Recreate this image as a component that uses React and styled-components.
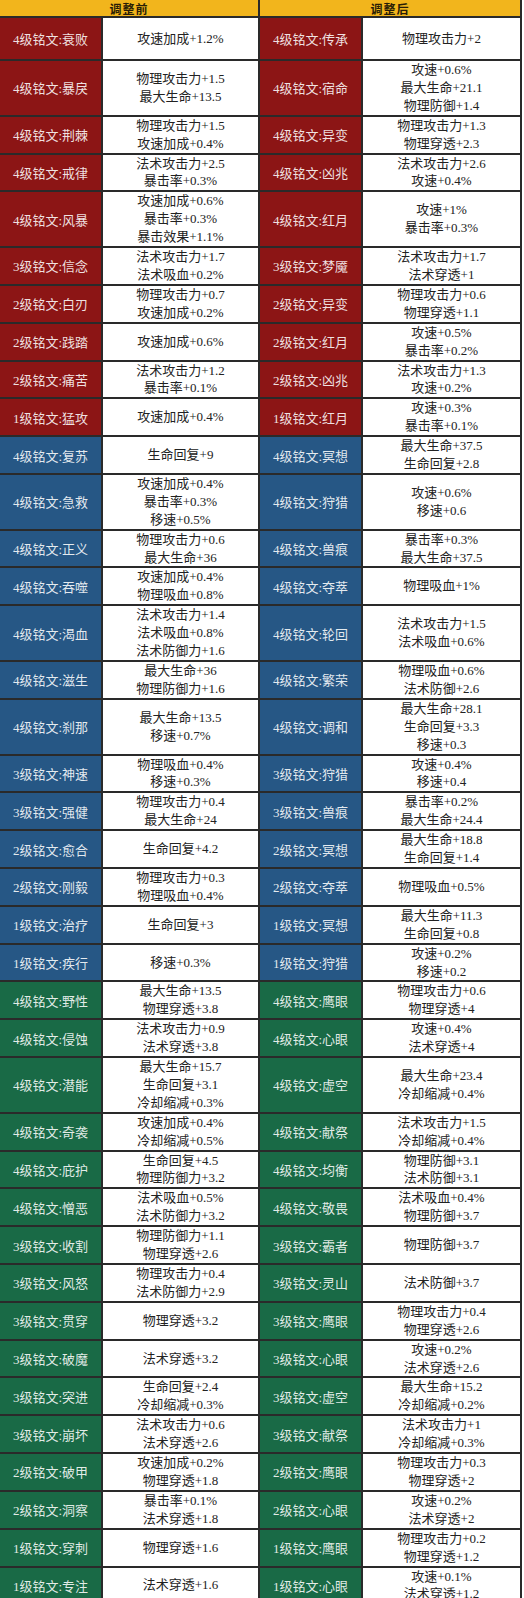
import React from "react";
import styled, { createGlobalStyle } from "styled-components";

const GlobalStyle = createGlobalStyle`
  body {
    margin: 0;
    background: #ffffff;
  }
`;

const tones = {
  red: "#8c1515",
  blue: "#265785",
  green: "#196a46",
};

const rows = [
  ["red", "4级铭文:衰败", ["攻速加成+1.2%"], "4级铭文:传承", ["物理攻击力+2"], true],
  ["red", "4级铭文:暴戾", ["物理攻击力+1.5", "最大生命+13.5"], "4级铭文:宿命", ["攻速+0.6%", "最大生命+21.1", "物理防御+1.4"]],
  ["red", "4级铭文:荆棘", ["物理攻击力+1.5", "攻速加成+0.4%"], "4级铭文:异变", ["物理攻击力+1.3", "物理穿透+2.3"]],
  ["red", "4级铭文:戒律", ["法术攻击力+2.5", "暴击率+0.3%"], "4级铭文:凶兆", ["法术攻击力+2.6", "攻速+0.4%"]],
  ["red", "4级铭文:风暴", ["攻速加成+0.6%", "暴击率+0.3%", "暴击效果+1.1%"], "4级铭文:红月", ["攻速+1%", "暴击率+0.3%"]],
  ["red", "3级铭文:信念", ["法术攻击力+1.7", "法术吸血+0.2%"], "3级铭文:梦魇", ["法术攻击力+1.7", "法术穿透+1"]],
  ["red", "2级铭文:白刃", ["物理攻击力+0.7", "攻速加成+0.2%"], "2级铭文:异变", ["物理攻击力+0.6", "物理穿透+1.1"]],
  ["red", "2级铭文:践踏", ["攻速加成+0.6%"], "2级铭文:红月", ["攻速+0.5%", "暴击率+0.2%"]],
  ["red", "2级铭文:痛苦", ["法术攻击力+1.2", "暴击率+0.1%"], "2级铭文:凶兆", ["法术攻击力+1.3", "攻速+0.2%"]],
  ["red", "1级铭文:猛攻", ["攻速加成+0.4%"], "1级铭文:红月", ["攻速+0.3%", "暴击率+0.1%"]],
  ["blue", "4级铭文:复苏", ["生命回复+9"], "4级铭文:冥想", ["最大生命+37.5", "生命回复+2.8"]],
  ["blue", "4级铭文:急救", ["攻速加成+0.4%", "暴击率+0.3%", "移速+0.5%"], "4级铭文:狩猎", ["攻速+0.6%", "移速+0.6"]],
  ["blue", "4级铭文:正义", ["物理攻击力+0.6", "最大生命+36"], "4级铭文:兽痕", ["暴击率+0.3%", "最大生命+37.5"]],
  ["blue", "4级铭文:吞噬", ["攻速加成+0.4%", "物理吸血+0.8%"], "4级铭文:夺萃", ["物理吸血+1%"]],
  ["blue", "4级铭文:渴血", ["法术攻击力+1.4", "法术吸血+0.8%", "法术防御力+1.6"], "4级铭文:轮回", ["法术攻击力+1.5", "法术吸血+0.6%"]],
  ["blue", "4级铭文:滋生", ["最大生命+36", "物理防御力+1.6"], "4级铭文:繁荣", ["物理吸血+0.6%", "法术防御+2.6"]],
  ["blue", "4级铭文:刹那", ["最大生命+13.5", "移速+0.7%"], "4级铭文:调和", ["最大生命+28.1", "生命回复+3.3", "移速+0.3"]],
  ["blue", "3级铭文:神速", ["物理吸血+0.4%", "移速+0.3%"], "3级铭文:狩猎", ["攻速+0.4%", "移速+0.4"]],
  ["blue", "3级铭文:强健", ["物理攻击力+0.4", "最大生命+24"], "3级铭文:兽痕", ["暴击率+0.2%", "最大生命+24.4"]],
  ["blue", "2级铭文:愈合", ["生命回复+4.2"], "2级铭文:冥想", ["最大生命+18.8", "生命回复+1.4"]],
  ["blue", "2级铭文:刚毅", ["物理攻击力+0.3", "物理吸血+0.4%"], "2级铭文:夺萃", ["物理吸血+0.5%"]],
  ["blue", "1级铭文:治疗", ["生命回复+3"], "1级铭文:冥想", ["最大生命+11.3", "生命回复+0.8"]],
  ["blue", "1级铭文:疾行", ["移速+0.3%"], "1级铭文:狩猎", ["攻速+0.2%", "移速+0.2"]],
  ["green", "4级铭文:野性", ["最大生命+13.5", "物理穿透+3.8"], "4级铭文:鹰眼", ["物理攻击力+0.6", "物理穿透+4"]],
  ["green", "4级铭文:侵蚀", ["法术攻击力+0.9", "法术穿透+3.8"], "4级铭文:心眼", ["攻速+0.4%", "法术穿透+4"]],
  ["green", "4级铭文:潜能", ["最大生命+15.7", "生命回复+3.1", "冷却缩减+0.3%"], "4级铭文:虚空", ["最大生命+23.4", "冷却缩减+0.4%"]],
  ["green", "4级铭文:奇袭", ["攻速加成+0.4%", "冷却缩减+0.5%"], "4级铭文:献祭", ["法术攻击力+1.5", "冷却缩减+0.4%"]],
  ["green", "4级铭文:庇护", ["生命回复+4.5", "物理防御力+3.2"], "4级铭文:均衡", ["物理防御+3.1", "法术防御+3.1"]],
  ["green", "4级铭文:憎恶", ["法术吸血+0.5%", "法术防御力+3.2"], "4级铭文:敬畏", ["法术吸血+0.4%", "物理防御+3.7"]],
  ["green", "3级铭文:收割", ["物理防御力+1.1", "物理穿透+2.6"], "3级铭文:霸者", ["物理防御+3.7"]],
  ["green", "3级铭文:风怒", ["物理攻击力+0.4", "法术防御力+2.9"], "3级铭文:灵山", ["法术防御+3.7"]],
  ["green", "3级铭文:贯穿", ["物理穿透+3.2"], "3级铭文:鹰眼", ["物理攻击力+0.4", "物理穿透+2.6"]],
  ["green", "3级铭文:破魔", ["法术穿透+3.2"], "3级铭文:心眼", ["攻速+0.2%", "法术穿透+2.6"]],
  ["green", "3级铭文:突进", ["生命回复+2.4", "冷却缩减+0.3%"], "3级铭文:虚空", ["最大生命+15.2", "冷却缩减+0.2%"]],
  ["green", "3级铭文:崩坏", ["法术攻击力+0.6", "法术穿透+2.6"], "3级铭文:献祭", ["法术攻击力+1", "冷却缩减+0.3%"]],
  ["green", "2级铭文:破甲", ["攻速加成+0.2%", "物理穿透+1.8"], "2级铭文:鹰眼", ["物理攻击力+0.3", "物理穿透+2"]],
  ["green", "2级铭文:洞察", ["暴击率+0.1%", "法术穿透+1.8"], "2级铭文:心眼", ["攻速+0.2%", "法术穿透+2"]],
  ["green", "1级铭文:穿刺", ["物理穿透+1.6"], "1级铭文:鹰眼", ["物理攻击力+0.2", "物理穿透+1.2"]],
  ["green", "1级铭文:专注", ["法术穿透+1.6"], "1级铭文:心眼", ["攻速+0.1%", "法术穿透+1.2"]],
];

export default function App() {
  return (
    <>
      <GlobalStyle />
      <Table>
        <HeadCell>调整前</HeadCell>
        <HeadCell>调整后</HeadCell>
        {rows.map(([tone, leftName, leftFx, rightName, rightFx, tall], i) => (
          <React.Fragment key={i}>
            <NameCell $tone={tone} $tall={tall}>{leftName}</NameCell>
            <FxCell $tall={tall}>
              {leftFx.map((line) => (
                <FxLine key={line}>{line}</FxLine>
              ))}
            </FxCell>
            <NameCell $tone={tone} $tall={tall}>{rightName}</NameCell>
            <FxCell $tall={tall}>
              {rightFx.map((line) => (
                <FxLine key={line}>{line}</FxLine>
              ))}
            </FxCell>
          </React.Fragment>
        ))}
      </Table>
    </>
  );
}

const Table = styled.div`
  display: grid;
  grid-template-columns: 101px 155px 101px 157px;
  gap: 2px;
  width: 520px;
  background: #2a2a2a;
  border-right: 2px solid #2a2a2a;
  font-family: "Liberation Serif", "Noto Sans CJK SC", serif;
  font-size: 13px;
`;

const HeadCell = styled.div`
  grid-column: span 2;
  height: 16px;
  display: flex;
  align-items: center;
  justify-content: center;
  background: #f2b51c;
  color: #2a1d05;
  font-family: "Noto Sans CJK SC", sans-serif;
  font-weight: 700;
  font-size: 12px;
  letter-spacing: 1px;
`;

const NameCell = styled.div`
  display: flex;
  align-items: center;
  justify-content: center;
  min-height: ${({ $tall }) => ($tall ? "41px" : "0")};
  background: ${({ $tone }) => tones[$tone]};
  color: rgba(255, 255, 255, 0.88);
  white-space: nowrap;
`;

const FxCell = styled.div`
  display: flex;
  flex-direction: column;
  align-items: center;
  justify-content: center;
  min-height: ${({ $tall }) => ($tall ? "41px" : "0")};
  background: #ffffff;
  color: #222222;
`;

const FxLine = styled.div`
  line-height: 17.9px;
  white-space: nowrap;
`;
